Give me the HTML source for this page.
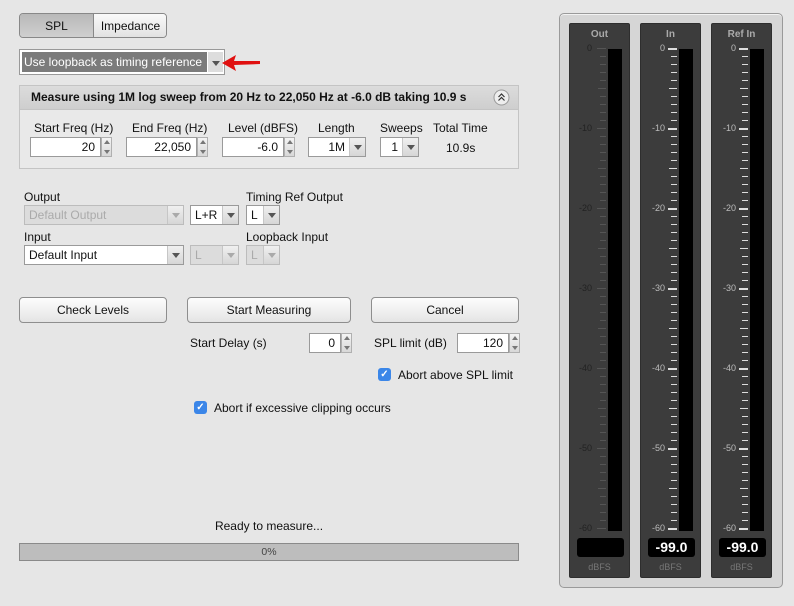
<!DOCTYPE html>
<html><head><meta charset="utf-8"><style>
*{box-sizing:border-box;margin:0;padding:0}
body{width:794px;height:606px;background:#e6e6e6;font-family:"Liberation Sans",sans-serif;font-size:11px;color:#111;position:relative;overflow:hidden}
.a{position:absolute}
.btn{position:absolute;border:1px solid #8e8e8e;border-radius:4px;background:linear-gradient(#fdfdfd,#e4e4e4);text-align:center;font-size:12px;line-height:25px}
.fld{position:absolute;background:#fff;border:1px solid #9a9a9a;text-align:right;padding-right:5px;font-size:12px;line-height:19px}
.spin{position:absolute;width:11px;border:1px solid #b0b0b0;background:linear-gradient(#f4f4f4,#d8d8d8)}
.spin:before{content:"";position:absolute;left:2px;top:2px;border:3px solid transparent;border-bottom:4px solid #777;border-top:0}
.spin:after{content:"";position:absolute;left:2px;bottom:2px;border:3px solid transparent;border-top:4px solid #777;border-bottom:0}
.cmb{position:absolute;background:#fff;border:1px solid #9a9a9a;font-size:12px;line-height:19px;padding-left:4px}
.cmb i{position:absolute;right:0;top:0;bottom:0;width:16px;background:linear-gradient(#f0f0f0,#d6d6d6);border-left:1px solid #c6c6c6}
.cmb i:after{content:"";position:absolute;left:4px;top:7px;border:4px solid transparent;border-top:5px solid #555;border-bottom:0}
.dis{background:#dcdcdc;color:#aaa;border-color:#bcbcbc}
.dis i:after{border-top-color:#aaa}
.lbl{position:absolute;font-size:12px}
.chk{position:absolute;width:13px;height:13px;border-radius:3px;background:#3b86e8;color:#fff;font-size:10px;line-height:13px;text-align:center;font-weight:bold}
.col{position:absolute;top:23px;width:61px;height:555px;background:#3c3c3c;border:1px solid #2e2e2e;border-radius:2px}
.bar{position:absolute;top:25px;width:14px;height:482px;background:#000}
.val{position:absolute;top:514px;left:7px;width:47px;height:19px;background:#000;border-radius:3px;color:#fff;font-weight:bold;font-size:14px;text-align:center;line-height:19px}
.db{position:absolute;top:538px;width:100%;text-align:center;color:#777;font-size:9px}
.ttl{position:absolute;top:5px;width:100%;text-align:center;color:#aaa;font-weight:bold;font-size:10px}
</style></head><body>
<div class="a" style="left:19px;top:13px;width:148px;height:25px;border:1px solid #888;border-radius:4px;overflow:hidden">
 <div class="a" style="left:0;top:0;width:74px;height:23px;background:linear-gradient(#b8b8b8,#cfcfcf);text-align:center;line-height:24px;font-size:12px;border-right:1px solid #888">SPL</div>
 <div class="a" style="left:74px;top:0;width:73px;height:23px;background:linear-gradient(#fafafa,#e2e2e2);text-align:center;line-height:24px;font-size:12px">Impedance</div>
</div>
<div class="a" style="left:19px;top:49px;width:206px;height:26px;border:1px solid #999;background:#fff">
 <div class="a" style="left:2px;top:2px;width:185px;height:20px;background:#7b7b7b;color:#fff;font-size:12px;line-height:21px;padding-left:2px">Use loopback as timing reference</div>
 <div class="a" style="left:188px;top:2px;width:15px;height:20px;background:#ddd"></div>
 <div class="a" style="left:192px;top:11px;border:4px solid transparent;border-top:5px solid #555"></div>
</div>
<svg class="a" style="left:218px;top:53px" width="45" height="20"><path d="M4 10 L18 2 L16 8 L42 8 L42 11 L16 12 L18 18 Z" fill="#e01010"/></svg>
<div class="a" style="left:19px;top:85px;width:500px;height:84px;border:1px solid #c4c4c4;background:#e9e9e9"></div>
<div class="a" style="left:19px;top:85px;width:500px;height:25px;background:linear-gradient(#dcdcdc,#cecece);border:1px solid #c4c4c4;font-weight:bold;font-size:12px;line-height:23px;padding-left:11px">Measure using 1M log sweep from 20 Hz to 22,050 Hz at -6.0 dB taking 10.9 s</div>
<svg class="a" style="left:493px;top:89px" width="17" height="17"><circle cx="8.5" cy="8.5" r="7.5" fill="#eee" stroke="#999"/><path d="M5.5 8 L8.5 5 L11.5 8 M5.5 11.5 L8.5 8.5 L11.5 11.5" fill="none" stroke="#333" stroke-width="1.2"/></svg>
<div class="lbl" style="left:34px;top:121px">Start Freq (Hz)</div>
<div class="lbl" style="left:132px;top:121px">End Freq (Hz)</div>
<div class="lbl" style="left:228px;top:121px">Level (dBFS)</div>
<div class="lbl" style="left:318px;top:121px">Length</div>
<div class="lbl" style="left:380px;top:121px">Sweeps</div>
<div class="lbl" style="left:433px;top:121px">Total Time</div>
<div class="fld" style="left:30px;top:137px;width:71px;height:20px">20</div><div class="spin" style="left:101px;top:137px;height:20px"></div>
<div class="fld" style="left:126px;top:137px;width:71px;height:20px">22,050</div><div class="spin" style="left:197px;top:137px;height:20px"></div>
<div class="fld" style="left:222px;top:137px;width:62px;height:20px">-6.0</div><div class="spin" style="left:284px;top:137px;height:20px"></div>
<div class="cmb" style="left:308px;top:137px;width:58px;height:20px;text-align:right;padding-right:20px">1M<i></i></div>
<div class="cmb" style="left:380px;top:137px;width:39px;height:20px;text-align:right;padding-right:20px">1<i></i></div>
<div class="lbl" style="left:446px;top:141px">10.9s</div>
<div class="lbl" style="left:24px;top:190px">Output</div>
<div class="lbl" style="left:246px;top:190px">Timing Ref Output</div>
<div class="cmb dis" style="left:24px;top:205px;width:160px;height:20px">Default Output<i></i></div>
<div class="cmb" style="left:190px;top:205px;width:49px;height:20px">L+R<i></i></div>
<div class="cmb" style="left:246px;top:205px;width:34px;height:20px">L<i></i></div>
<div class="lbl" style="left:24px;top:230px">Input</div>
<div class="lbl" style="left:246px;top:230px">Loopback Input</div>
<div class="cmb" style="left:24px;top:245px;width:160px;height:20px">Default Input<i></i></div>
<div class="cmb dis" style="left:190px;top:245px;width:49px;height:20px">L<i></i></div>
<div class="cmb dis" style="left:246px;top:245px;width:34px;height:20px">L<i></i></div>
<div class="btn" style="left:19px;top:297px;width:148px;height:26px">Check Levels</div>
<div class="btn" style="left:187px;top:297px;width:164px;height:26px">Start Measuring</div>
<div class="btn" style="left:371px;top:297px;width:148px;height:26px">Cancel</div>
<div class="lbl" style="left:190px;top:336px">Start Delay (s)</div>
<div class="fld" style="left:309px;top:333px;width:32px;height:20px">0</div><div class="spin" style="left:341px;top:333px;height:20px"></div>
<div class="lbl" style="left:374px;top:336px">SPL limit (dB)</div>
<div class="fld" style="left:457px;top:333px;width:52px;height:20px">120</div><div class="spin" style="left:509px;top:333px;height:20px"></div>
<div class="chk" style="left:378px;top:368px">&#10003;</div><div class="lbl" style="left:398px;top:368px">Abort above SPL limit</div>
<div class="chk" style="left:194px;top:401px">&#10003;</div><div class="lbl" style="left:214px;top:401px">Abort if excessive clipping occurs</div>
<div class="lbl" style="left:0;width:538px;text-align:center;top:519px">Ready to measure...</div>
<div class="a" style="left:19px;top:543px;width:500px;height:18px;background:#bdbdbd;border:1px solid #8a8a8a;text-align:center;font-size:10.5px;line-height:16px;color:#444">0%</div>
<div class="a" style="left:559px;top:13px;width:224px;height:575px;background:#d6d6d6;border:1px solid #9a9a9a;border-radius:5px;box-shadow:inset 0 1px 0 #f2f2f2"></div>
<div id="m"></div>
<script>
var cols=[[569,"Out",false,""],[640,"In",true,"-99.0"],[711,"Ref In",true,"-99.0"]],h="";
cols.forEach(function(c){
 var x=c[0],lit=c[2],tc=lit?"#ddd":"#555",lc=lit?"#bbb":"#222";
 h+='<div class="col" style="left:'+x+'px"><div class="ttl">'+c[1]+'</div><div class="bar" style="left:38px"></div><div class="val">'+c[3]+'</div><div class="db">dBFS</div>';
 for(var d=0;d<=60;d++){var y=25+d*8-1,maj=d%10==0,med=d%5==0;
  var w=maj?9:(med?8:6);
  h+='<div class="a" style="left:'+(36-w)+'px;top:'+y+'px;width:'+w+'px;height:'+(maj&&lit?2:1)+'px;background:'+tc+'"></div>';
  if(maj)h+='<div class="a" style="left:0;width:'+(lit?24:22)+'px;text-align:right;top:'+(y-5)+'px;font-size:9px;color:'+lc+'">'+(d?'-'+d:'0')+'</div>';}
 h+='</div>';});
document.getElementById("m").innerHTML=h;
</script>
</body></html>
